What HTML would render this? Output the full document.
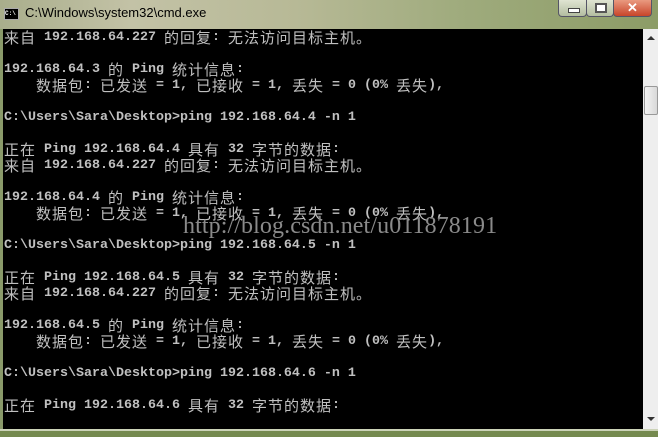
<!DOCTYPE html>
<html><head><meta charset="utf-8"><style>
*{margin:0;padding:0}
body{width:658px;height:435px;overflow:hidden;position:relative;background:#8a9a6a;font-family:"Liberation Sans",sans-serif}
.title{position:absolute;left:0;top:0;width:658px;height:29px;background:linear-gradient(90deg,#a9ae8c 0%,#c3c2a6 20%,#b7b996 45%,#9fab7d 70%,#8c9c66 100%)}
.title .t{position:absolute;left:25px;top:5px;font-size:13px;color:#000}
.icon{position:absolute;left:4px;top:8px;width:13px;height:10px;background:#000;border:1px solid #aaa;color:#fff;font:bold 6px "Liberation Mono",monospace;line-height:9px}
.btn{position:absolute;top:0;height:16px;border:1px solid #556;border-top:none;border-radius:0 0 4px 4px;background:linear-gradient(#dfe4d2,#b3bda0)}
.con{position:absolute;left:3px;top:29px;width:640px;height:400px;background:#000;overflow:hidden}
pre{position:absolute;left:1px;top:1px;font:bold 13.33px/16px "Liberation Mono",monospace;color:#c0c0c0;white-space:pre}
.c{font-family:"Noto Sans CJK SC",sans-serif;font-weight:normal;font-size:15px;letter-spacing:1px;line-height:16px;display:inline-block;height:16px;vertical-align:top}
.sb{position:absolute;left:643px;top:29px;width:15px;height:400px;background:#eeeeee}
.wm{position:absolute;font:24px "Liberation Serif",serif;color:#8a8a8a;letter-spacing:0.1px}
.bot{position:absolute;left:0;top:429px;width:658px;height:6px;background:#758a4f;border-top:2px solid #ccd3b8}
</style></head><body>
<div class="title"><div class="icon">C:\</div><div class="t">C:\Windows\system32\cmd.exe</div>
<div class="btn" style="left:558px;width:27px"><div style="position:absolute;left:9px;top:8px;width:10px;height:3px;background:#fff;border:1px solid #444"></div></div>
<div class="btn" style="left:586px;width:26px"><div style="position:absolute;left:8px;top:3px;width:8px;height:6px;border:2px solid #555;background:#fff"></div></div>
<div class="btn" style="left:613px;width:37px;background:linear-gradient(#e99a80,#c8452a);color:#fff;text-align:center;font:bold 13px/15px 'Liberation Sans'">✕</div>
</div>
<div class="con"><pre><span class="c">来自</span> 192.168.64.227 <span class="c">的回复</span>: <span class="c">无法访问目标主机。</span>

192.168.64.3 <span class="c">的</span> Ping <span class="c">统计信息</span>:
    <span class="c">数据包</span>: <span class="c">已发送</span> = 1, <span class="c">已接收</span> = 1, <span class="c">丢失</span> = 0 (0% <span class="c">丢失</span>),

C:\Users\Sara\Desktop>ping 192.168.64.4 -n 1

<span class="c">正在</span> Ping 192.168.64.4 <span class="c">具有</span> 32 <span class="c">字节的数据</span>:
<span class="c">来自</span> 192.168.64.227 <span class="c">的回复</span>: <span class="c">无法访问目标主机。</span>

192.168.64.4 <span class="c">的</span> Ping <span class="c">统计信息</span>:
    <span class="c">数据包</span>: <span class="c">已发送</span> = 1, <span class="c">已接收</span> = 1, <span class="c">丢失</span> = 0 (0% <span class="c">丢失</span>),

C:\Users\Sara\Desktop>ping 192.168.64.5 -n 1

<span class="c">正在</span> Ping 192.168.64.5 <span class="c">具有</span> 32 <span class="c">字节的数据</span>:
<span class="c">来自</span> 192.168.64.227 <span class="c">的回复</span>: <span class="c">无法访问目标主机。</span>

192.168.64.5 <span class="c">的</span> Ping <span class="c">统计信息</span>:
    <span class="c">数据包</span>: <span class="c">已发送</span> = 1, <span class="c">已接收</span> = 1, <span class="c">丢失</span> = 0 (0% <span class="c">丢失</span>),

C:\Users\Sara\Desktop>ping 192.168.64.6 -n 1

<span class="c">正在</span> Ping 192.168.64.6 <span class="c">具有</span> 32 <span class="c">字节的数据</span>:</pre>
<div class="wm" style="left:180px;top:184px">http://blog.csdn.net/u011878191</div></div>
<div class="sb">
<div style="position:absolute;left:4px;top:7px;width:0;height:0;border-left:4px solid transparent;border-right:4px solid transparent;border-bottom:4px solid #333"></div>
<div style="position:absolute;left:1px;top:57px;width:12px;height:27px;border:1px solid #999;border-radius:2px;background:linear-gradient(90deg,#f4f4f4,#d8d8d8)"></div>
<div style="position:absolute;left:4px;top:388px;width:0;height:0;border-left:4px solid transparent;border-right:4px solid transparent;border-top:4px solid #333"></div>
</div>
<div class="bot"></div>
</body></html>
